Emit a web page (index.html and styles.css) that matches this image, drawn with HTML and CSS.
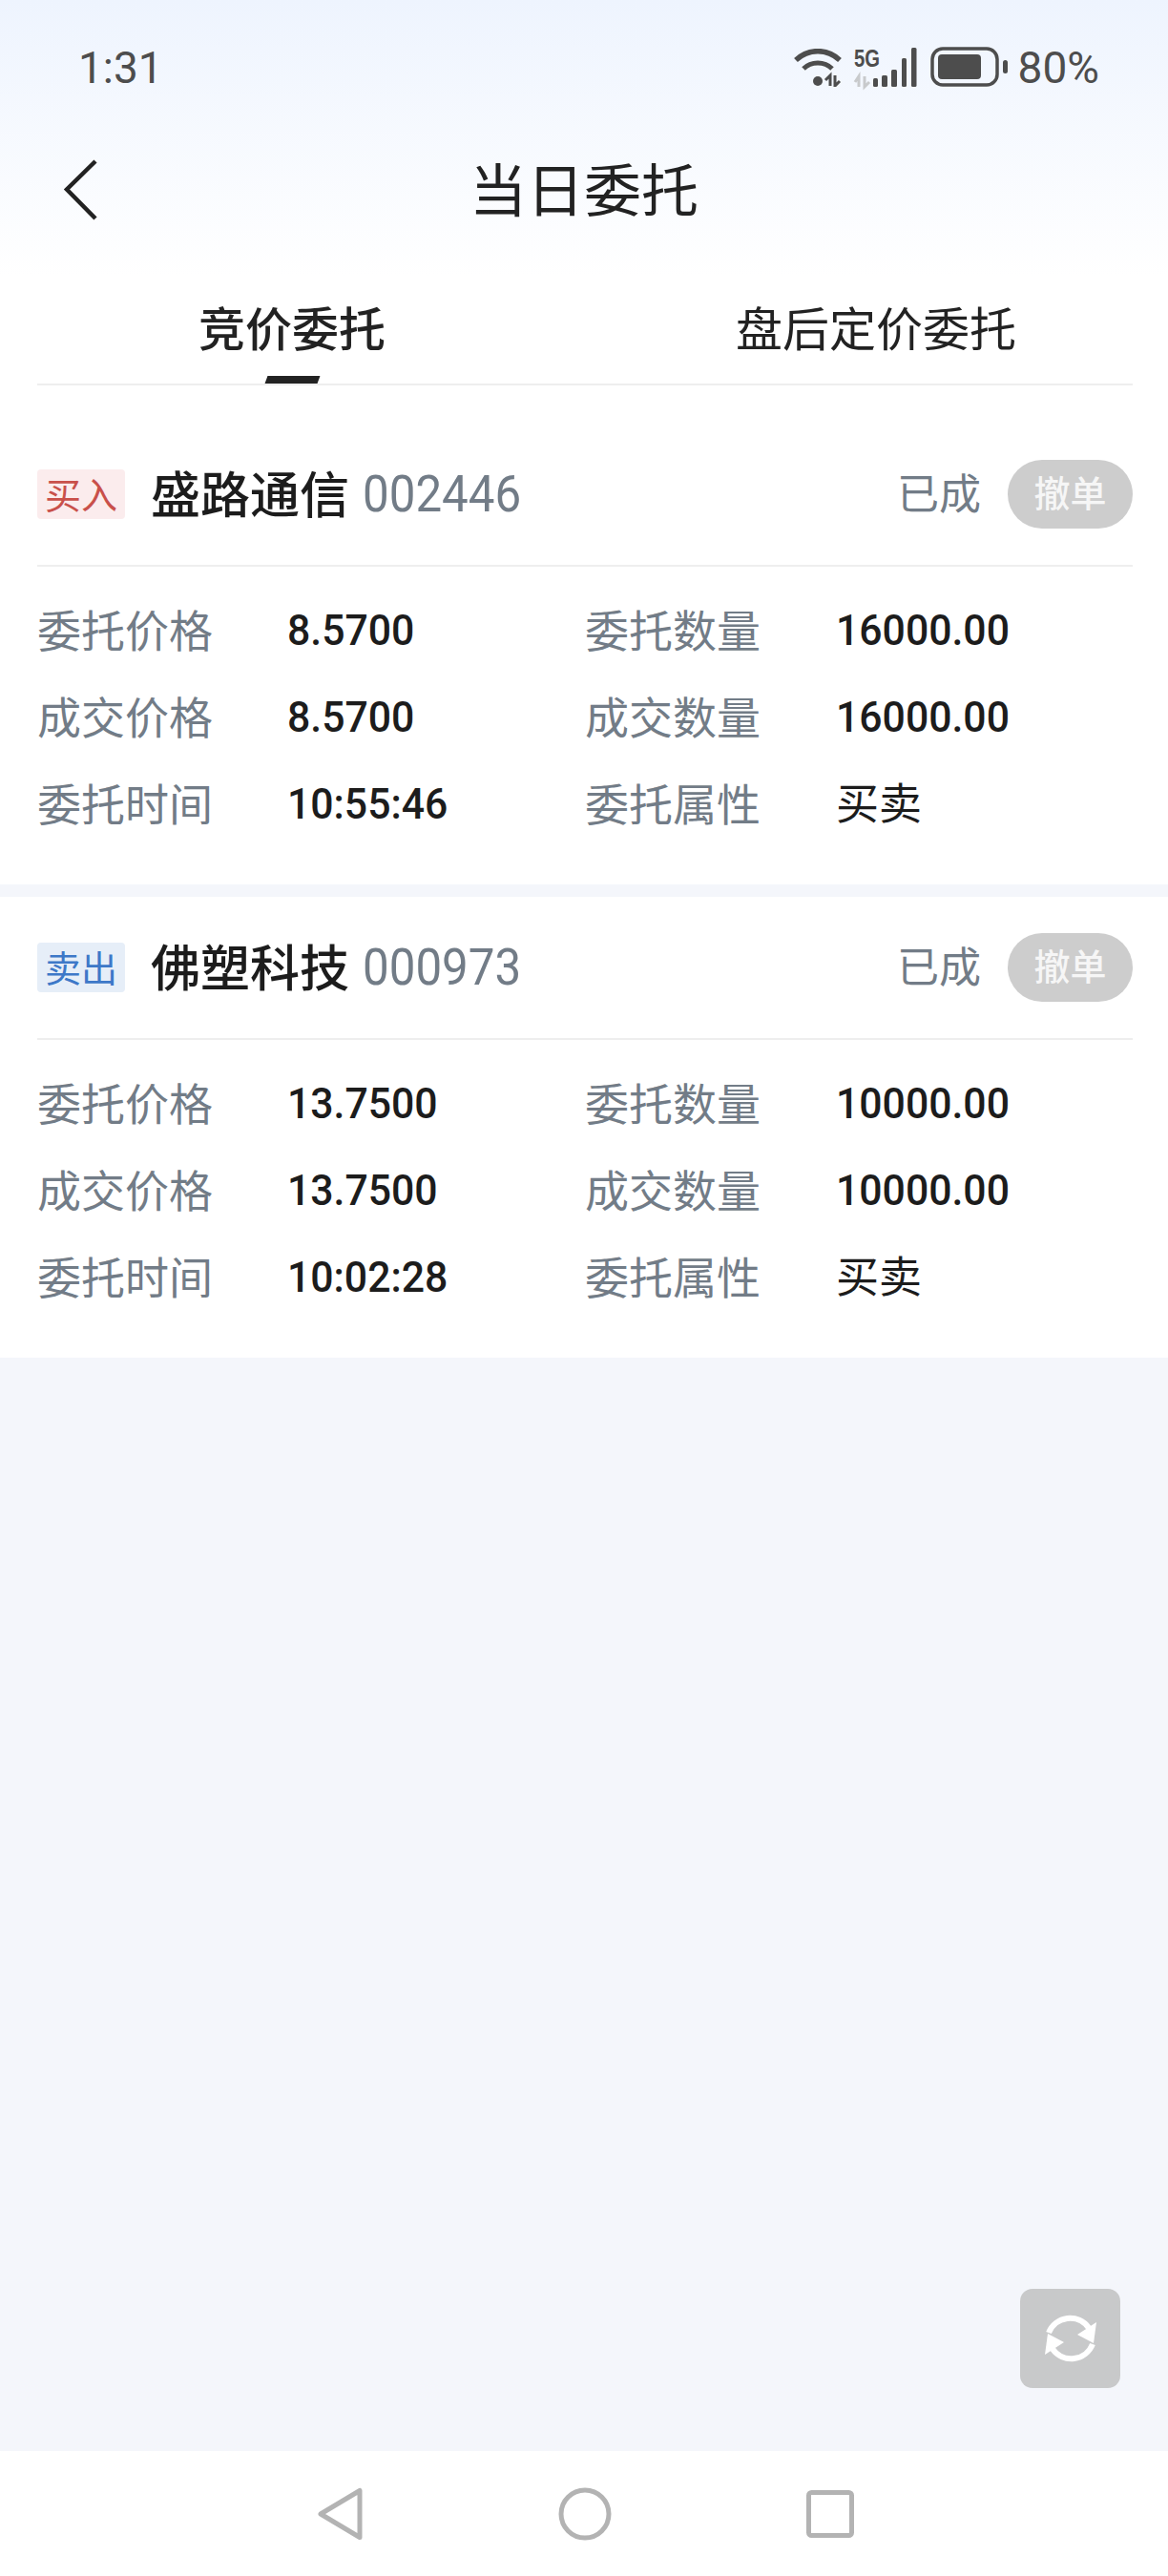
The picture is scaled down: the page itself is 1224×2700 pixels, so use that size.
FILE: index.html
```html
<!DOCTYPE html>
<html lang="zh">
<head>
<meta charset="utf-8">
<title>当日委托</title>
<link rel="stylesheet" href="styles.css">
</head>
<body>
<div class="app">
  <div class="top">
    <div class="status">
      <span class="time">1:31</span>
      <div class="status-icons">
        <svg class="ic-wifi" width="50" height="40" viewBox="0 0 50 40">
          <path d="M2 12C15 -0.5 35 -0.5 48 12" fill="none" stroke="#4d4d4d" stroke-width="5.500"/>
          <path d="M10 21C18 13 32 13 40 21" fill="none" stroke="#4d4d4d" stroke-width="5"/>
          <circle cx="25" cy="34" r="5" fill="#4d4d4d"/>
          <path d="M38 39V28l-5 5M43 28v11l5-5" fill="none" stroke="#4d4d4d" stroke-width="3"/>
        </svg>
        <svg class="ic-signal" width="66" height="42" viewBox="0 0 66 42">
          <text x="0" y="21" class="fiveg" textLength="27" lengthAdjust="spacingAndGlyphs">5G</text>
          <path d="M5 42V31l-4 6M11 31v11l5-5" fill="none" stroke="#c8cacc" stroke-width="3"/>
          <rect x="20" y="33" width="5" height="9" rx="1.500" fill="#4d4d4d"/>
          <rect x="29" y="30" width="6" height="12" rx="1.500" fill="#4d4d4d"/>
          <rect x="39" y="24" width="6" height="18" rx="1.500" fill="#4d4d4d"/>
          <rect x="50" y="12" width="5" height="30" rx="1.500" fill="#4d4d4d"/>
          <rect x="60" y="1" width="5.500" height="41" rx="1.500" fill="#4d4d4d"/>
        </svg>
        <svg class="ic-battery" width="82" height="42" viewBox="0 0 82 42">
          <rect x="2" y="2" width="68" height="38" rx="11" fill="none" stroke="#4d4d4d" stroke-width="3.500"/>
          <rect x="8" y="8" width="45" height="26" rx="4" fill="#4d4d4d"/>
          <rect x="76" y="14" width="5" height="14" rx="2.500" fill="#4d4d4d"/>
        </svg>
        <span class="pct">80%</span>
      </div>
    </div>
    <div class="nav">
      <svg class="back" width="40" height="66" viewBox="0 0 40 66">
        <path d="M35 3L5 32.500L35 63" fill="none" stroke="#222" stroke-width="4.500"/>
      </svg>
      <h1 class="title">当日委托</h1>
    </div>
    <div class="tabs">
      <div class="tab tab-on">竞价委托<i class="tab-bar"></i></div>
      <div class="tab">盘后定价委托</div>
    </div>
    <div class="tabs-line"></div>
  </div>

  <div class="card">
    <div class="card-head">
      <span class="badge badge-buy">买入</span>
      <span class="name">盛路通信</span>
      <span class="code">002446</span>
      <span class="state">已成</span>
      <span class="cancel">撤单</span>
    </div>
    <div class="grid">
      <span class="lab">委托价格</span><span class="val">8.5700</span>
      <span class="lab">委托数量</span><span class="val">16000.00</span>
      <span class="lab">成交价格</span><span class="val">8.5700</span>
      <span class="lab">成交数量</span><span class="val">16000.00</span>
      <span class="lab">委托时间</span><span class="val">10:55:46</span>
      <span class="lab">委托属性</span><span class="val val-cjk">买卖</span>
    </div>
  </div>

  <div class="card">
    <div class="card-head">
      <span class="badge badge-sell">卖出</span>
      <span class="name">佛塑科技</span>
      <span class="code">000973</span>
      <span class="state">已成</span>
      <span class="cancel">撤单</span>
    </div>
    <div class="grid">
      <span class="lab">委托价格</span><span class="val">13.7500</span>
      <span class="lab">委托数量</span><span class="val">10000.00</span>
      <span class="lab">成交价格</span><span class="val">13.7500</span>
      <span class="lab">成交数量</span><span class="val">10000.00</span>
      <span class="lab">委托时间</span><span class="val">10:02:28</span>
      <span class="lab">委托属性</span><span class="val val-cjk">买卖</span>
    </div>
  </div>

  <div class="fill">
    <div class="refresh">
      <svg width="60" height="56" viewBox="0 0 60 56">
        <path d="M7 22A24 24 0 0 1 49 17" fill="none" stroke="#fff" stroke-width="6"/>
        <path d="M57 11L54 33L37 24Z" fill="#fff"/>
        <path d="M53 34A24 24 0 0 1 11 39" fill="none" stroke="#fff" stroke-width="6"/>
        <path d="M3 45L6 23L23 32Z" fill="#fff"/>
      </svg>
    </div>
  </div>

  <div class="sysnav">
    <svg width="48" height="56" viewBox="0 0 48 56">
      <path d="M44 3.500V52.500L3 28Z" fill="none" stroke="#b3b3b3" stroke-width="5" stroke-linejoin="round"/>
    </svg>
    <svg width="56" height="56" viewBox="0 0 56 56">
      <circle cx="28" cy="28" r="25" fill="none" stroke="#b3b3b3" stroke-width="5"/>
    </svg>
    <svg width="50" height="50" viewBox="0 0 50 50">
      <rect x="2.500" y="2.500" width="45" height="45" rx="3" fill="none" stroke="#b3b3b3" stroke-width="5"/>
    </svg>
  </div>
</div>
</body>
</html>
```

FILE: styles.css
```css
* { box-sizing: border-box; }
html, body { margin: 0; padding: 0; }
body {
  width: 1224px;
  height: 2700px;
  overflow: hidden;
  font-family: "Noto Sans CJK SC", "Noto Sans", sans-serif;
  background: #f4f6fb;
}
.app {
  display: flex;
  flex-direction: column;
  height: 2700px;
}
.top {
  background: linear-gradient(180deg, #eef4fe 0, #ffffff 290px);
  height: 444px;
  flex: none;
}
.status {
  height: 142px;
  padding: 49px 72px 0 82px;
  display: flex;
  justify-content: space-between;
  align-items: flex-start;
  color: #4d4d4d;
  font-family: Roboto, sans-serif;
}
.time { font-size: 46px; line-height: 46px; margin-top: -1px; }
.status-icons { display: flex; align-items: flex-start; }
.ic-wifi { margin-top: 2px; margin-right: 13px; }
.ic-signal { margin-right: 14px; overflow: visible; }
.ic-battery { margin-right: 10px; }
.fiveg { font: 700 25px "Liberation Sans", sans-serif; fill: #4d4d4d; }
.pct { font-size: 46px; line-height: 46px; margin-top: -1px; }
.nav {
  height: 114px;
  padding-bottom: 6px;
  display: flex;
  align-items: center;
  justify-content: center;
  position: relative;
}
.back { position: absolute; left: 65px; top: 24px; }
.title {
  margin: 0;
  font-size: 60px;
  font-weight: 400;
  color: #222;
  line-height: 60px;
}
.tabs {
  display: flex;
  height: 146px;
}
.tabs-line {
  margin: 0 37px 0 39px;
  height: 2px;
  background: #eeeeee;
}
.tab {
  position: relative;
  flex: 1;
  text-align: center;
  font-size: 49px;
  line-height: 56px;
  padding-top: 58px;
  color: #222;
}
.tab-on { font-weight: 500; }
.tab-bar {
  position: absolute;
  left: 279px;
  bottom: 0;
  width: 55px;
  height: 8px;
  background: #222;
  transform: skewX(-20deg);
}
.card {
  flex: none;
  height: 483px;
  background: #fff;
  margin-bottom: 13px;
  padding: 0 37px 0 39px;
}
.card-head {
  height: 150px;
  padding-top: 38px;
  padding-bottom: 38px;
  border-bottom: 2px solid #eeeeee;
  display: flex;
  align-items: center;
}
.badge {
  width: 92px;
  height: 52px;
  border-radius: 4px;
  font-size: 38px;
  line-height: 50px;
  text-align: center;
  flex: none;
}
.badge-buy { background: #fbeced; color: #c9504a; }
.badge-sell { background: #e6eef8; color: #3d78c8; }
.name {
  margin-left: 27px;
  margin-bottom: 4px;
  font-size: 52px;
  font-weight: 500;
  line-height: 68px;
  color: #1c1c1c;
}
.code {
  margin-left: 14px;
  font-family: Roboto, sans-serif;
  font-size: 53px;
  line-height: 68px;
  color: #727c87;
  transform: scaleX(0.93);
  transform-origin: left center;
}
.state {
  margin-left: auto;
  margin-bottom: 6px;
  font-size: 44px;
  line-height: 64px;
  color: #727c87;
}
.cancel {
  margin-left: 28px;
  width: 131px;
  height: 72px;
  border-radius: 36px;
  background: #cdcdcd;
  color: #f6f6f6;
  font-size: 38px;
  font-weight: 500;
  line-height: 65px;
  text-align: center;
}
.grid {
  display: grid;
  grid-template-columns: 262px 312px 263px 1fr;
  grid-auto-rows: 91px;
  padding-top: 21px;
  align-items: center;
}
.lab { font-size: 46px; line-height: 60px; color: #727c87; padding-bottom: 5px; height: 65px; }
.val {
  font-family: Roboto, sans-serif;
  font-size: 45px;
  line-height: 60px;
  font-weight: 500;
  color: #1c1c1c;
  transform: scaleX(0.95);
  transform-origin: left center;
}
.val-cjk {
  font-family: "Noto Sans CJK SC", sans-serif;
  font-weight: 400;
  transform: none;
  padding-bottom: 5px;
  height: 65px;
}
.fill {
  flex: 1;
  position: relative;
}
.refresh {
  position: absolute;
  left: 1069px;
  bottom: 66px;
  width: 105px;
  height: 104px;
  border-radius: 13px;
  background: #c8c9ca;
  display: flex;
  align-items: center;
  justify-content: center;
}
.sysnav {
  flex: none;
  height: 131px;
  background: #fff;
  display: flex;
  align-items: center;
  padding-left: 333px;
  gap: 204px;
}
```
